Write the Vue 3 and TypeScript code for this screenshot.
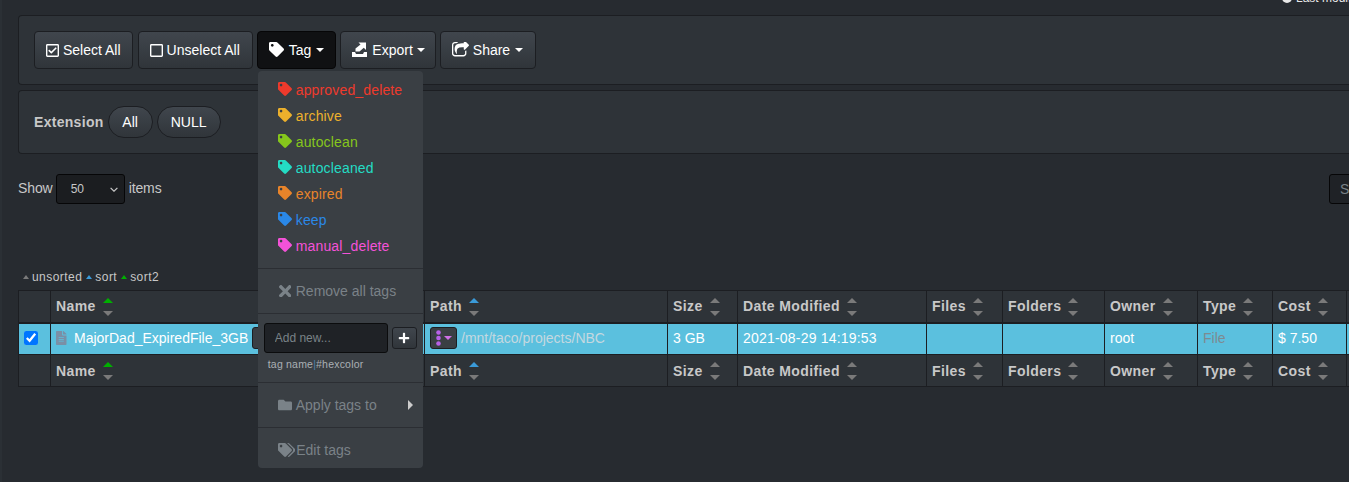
<script setup lang="ts">
// Dark "slate" file table with the Tag dropdown open
interface TagItem {
  name: string
  color: string
}
interface Column {
  label: string
  width: number
  sort: 'none' | 'blue' | 'green'
}

const icons = {
  tag: 'M0 252.118V48C0 21.49 21.49 0 48 0h204.118a48 48 0 0 1 33.941 14.059l211.882 211.882c18.745 18.745 18.745 49.137 0 67.882L293.823 497.941c-18.745 18.745-49.137 18.745-67.882 0L14.059 286.059A48 48 0 0 1 0 252.118zM112 64c-26.51 0-48 21.49-48 48s21.49 48 48 48 48-21.49 48-48-21.49-48-48-48z',
  tags: 'M497.941 225.941L286.059 14.059A48 48 0 0 0 252.118 0H48C21.49 0 0 21.49 0 48v204.118a48 48 0 0 0 14.059 33.941l211.882 211.882c18.745 18.745 49.137 18.745 67.882 0l204.118-204.118c18.745-18.745 18.745-49.137 0-67.882zM112 160c-26.51 0-48-21.49-48-48s21.49-48 48-48 48 21.49 48 48-21.49 48-48 48zm513.941 133.823L421.823 497.941c-18.745 18.745-49.137 18.745-67.882 0l-.36-.36L527.64 323.522c16.999-16.999 26.36-39.6 26.36-63.64s-9.362-46.641-26.36-63.64L331.397 0h48.721a48 48 0 0 1 33.941 14.059l211.882 211.882c18.745 18.745 18.745 49.137 0 67.882z',
  times: 'M242.72 256l100.07-100.07c12.28-12.28 12.28-32.19 0-44.48l-22.24-22.24c-12.28-12.28-32.19-12.28-44.48 0L176 189.28 75.93 89.21c-12.28-12.28-32.19-12.28-44.48 0L9.21 111.45c-12.28 12.28-12.28 32.19 0 44.48L109.28 256 9.21 356.07c-12.28 12.28-12.28 32.19 0 44.48l22.24 22.24c12.28 12.28 32.2 12.28 44.48 0L176 322.72l100.07 100.07c12.28 12.28 32.2 12.28 44.48 0l22.24-22.24c12.28-12.28 12.28-32.19 0-44.48L242.72 256z',
  folder: 'M464 128H272l-64-64H48C21.49 64 0 85.49 0 112v288c0 26.51 21.49 48 48 48h416c26.51 0 48-21.49 48-48V176c0-26.51-21.49-48-48-48z',
  plus: 'M416 208H272V64c0-17.67-14.33-32-32-32h-32c-17.67 0-32 14.33-32 32v144H32c-17.67 0-32 14.33-32 32v32c0 17.67 14.33 32 32 32h144v144c0 17.67 14.33 32 32 32h32c17.67 0 32-14.33 32-32V304h144c17.67 0 32-14.33 32-32v-32c0-17.67-14.33-32-32-32z',
  check: 'M400 32H48C21.49 32 0 53.49 0 80v352c0 26.51 21.49 48 48 48h352c26.51 0 48-21.49 48-48V80c0-26.51-21.49-48-48-48zm0 400H48V80h352v352zm-35.864-241.724L191.547 361.48c-4.705 4.667-12.303 4.637-16.97-.068l-90.781-91.516c-4.667-4.705-4.637-12.303.069-16.971l22.719-22.536c4.705-4.667 12.303-4.637 16.97.069l59.792 60.277 141.352-140.216c4.705-4.667 12.303-4.637 16.97.068l22.536 22.718c4.667 4.706 4.637 12.304-.068 16.971z',
  square: 'M400 32H48C21.5 32 0 53.5 0 80v352c0 26.5 21.5 48 48 48h352c26.5 0 48-21.5 48-48V80c0-26.5-21.5-48-48-48zm-6 400H54c-3.3 0-6-2.7-6-6V86c0-3.3 2.7-6 6-6h340c3.300 0 6 2.700 6 6v340c0 3.300-2.700 6-6 6z',
  share: 'M1472 989v259q0 119-84.5 203.5t-203.5 84.5h-832q-119 0-203.5-84.5t-84.5-203.5v-832q0-119 84.5-203.5t203.5-84.5h255q13 0 22.5 9.5t9.5 22.5q0 27-26 32-77 26-133 60-10 4-16 4h-112q-66 0-113 47t-47 113v832q0 66 47 113t113 47h832q66 0 113-47t47-113v-214q0-19 18-29 28-13 54-37 16-16 35-8 21 9 21 29zm237-496l-384 384q-18 19-45 19-12 0-25-5-39-17-39-59v-192h-160q-323 0-438 131-119 137-74 473 3 23-20 34-8 2-12 2-16 0-26-13-10-14-21-31t-39.5-68.5-49.5-99.5-38.5-114-17.5-122q0-49 3.5-91t14-90 28-88 47-81.5 68.5-74 94.5-61.5 124.5-48.5 159.5-30.5 196.5-11h160v-192q0-42 39-59 13-5 25-5 26 0 45 19l384 384q19 19 19 45t-19 45z',
  file: 'M224 136V0H24C10.7 0 0 10.7 0 24v464c0 13.3 10.7 24 24 24h336c13.3 0 24-10.7 24-24V160H248c-13.2 0-24-10.8-24-24zm64 236c0 6.6-5.4 12-12 12H108c-6.6 0-12-5.4-12-12v-8c0-6.6 5.4-12 12-12h168c6.6 0 12 5.4 12 12v8zm0-64c0 6.6-5.4 12-12 12H108c-6.6 0-12-5.4-12-12v-8c0-6.6 5.4-12 12-12h168c6.6 0 12 5.4 12 12v8zm0-72v8c0 6.6-5.4 12-12 12H108c-6.6 0-12-5.4-12-12v-8c0-6.6 5.4-12 12-12h168c6.6 0 12 5.4 12 12zm96-114.100v6.100H256V0h6.100c6.400 0 12.500 2.500 17 7l97.900 98c4.500 4.500 7 10.600 7 16.900z',
}

const tags: TagItem[] = [
  { name: 'approved_delete', color: '#ee3a2c' },
  { name: 'archive', color: '#ecb02c' },
  { name: 'autoclean', color: '#86c61c' },
  { name: 'autocleaned', color: '#24dcc4' },
  { name: 'expired', color: '#e8842a' },
  { name: 'keep', color: '#2a88e8' },
  { name: 'manual_delete', color: '#f452d8' },
]

const columns: Column[] = [
  { label: 'Name', width: 374, sort: 'green' },
  { label: 'Path', width: 243, sort: 'blue' },
  { label: 'Size', width: 70, sort: 'none' },
  { label: 'Date Modified', width: 189, sort: 'none' },
  { label: 'Files', width: 76, sort: 'none' },
  { label: 'Folders', width: 102, sort: 'none' },
  { label: 'Owner', width: 93, sort: 'none' },
  { label: 'Type', width: 75, sort: 'none' },
  { label: 'Cost', width: 74, sort: 'none' },
]
</script>

<template>
  <div class="page">
    <div class="updated">
      <span class="clock" />
      <span class="updated-text">Last modified</span>
    </div>

    <section class="well toolbar">
      <button class="btn btn--select">
        <svg class="ico" viewBox="0 32 448 448"><path :d="icons.check" /></svg>
        Select All
      </button>
      <button class="btn btn--unselect">
        <svg class="ico" viewBox="0 32 448 448"><path :d="icons.square" /></svg>
        Unselect All
      </button>
      <div class="drop">
        <button class="btn btn--active">
          <svg class="ico ico--tag" viewBox="0 0 512 512"><path :d="icons.tag" /></svg>
          Tag <span class="caret" />
        </button>
        <div class="menu">
          <a v-for="tag in tags" :key="tag.name" class="tag-item" :style="{ color: tag.color }">
            <svg class="tag-ico" viewBox="0 0 512 512"><path :d="icons.tag" /></svg>
            {{ tag.name }}
          </a>
          <div class="divider" />
          <a class="menu-link">
            <svg class="menu-ico menu-ico--times" viewBox="0 80 352 352"><path :d="icons.times" /></svg>
            Remove all tags
          </a>
          <div class="divider" />
          <div class="add-row">
            <input class="add-input" type="text" placeholder="Add new..." />
            <button class="add-btn">
              <svg viewBox="0 0 448 512"><path :d="icons.plus" /></svg>
            </button>
          </div>
          <div class="add-hint">tag name<span class="pipe">|</span>#hexcolor</div>
          <div class="divider" />
          <a class="menu-link">
            <svg class="menu-ico" viewBox="0 0 512 512"><path :d="icons.folder" /></svg>
            Apply tags to
            <span class="sub-caret" />
          </a>
          <div class="divider" />
          <a class="menu-link menu-link--tight">
            <svg class="menu-ico menu-ico--tags" viewBox="0 0 640 512"><path :d="icons.tags" /></svg>
            Edit tags
          </a>
        </div>
      </div>
      <button class="btn btn--export">
        <svg class="ico ico--export" viewBox="0 0 15 15">
          <path d="M0 10h3l1 2h7l1-2h3v5H0z" />
          <path d="M3.500 9.500V6.500L8.500 2.500 6.500.5H14V8l-2.200-2.200-4.300 3.700z" />
        </svg>
        Export <span class="caret" />
      </button>
      <button class="btn btn--share">
        <svg class="ico ico--share" viewBox="64 128 1664 1536"><path :d="icons.share" /></svg>
        Share <span class="caret" />
      </button>
    </section>

    <section class="well filter">
      <strong class="filter-label">Extension</strong>
      <button class="pill pill--all">All</button>
      <button class="pill pill--null">NULL</button>
    </section>

    <div class="length-row">
      <label class="length">
        <span class="length-text">Show</span>
        <span class="select-wrap">
          <select class="length-select">
            <option>50</option>
          </select>
          <svg class="select-chevron" viewBox="0 0 8 5"><path d="M.6.8 4 4.200 7.400.8" /></svg>
        </span>
        <span class="length-text">items</span>
      </label>
      <input class="search" type="text" placeholder="Search" />
    </div>

    <div class="legend">
      <span class="tri tri--up tri--none" /> unsorted
      <span class="tri tri--up tri--blue" /> sort
      <span class="tri tri--up tri--green" /> sort2
    </div>

    <table class="files">
      <colgroup>
        <col style="width: 32px" />
        <col v-for="col in columns" :key="col.label" :style="{ width: col.width + 'px' }" />
        <col style="width: 90px" />
      </colgroup>
      <thead>
        <tr>
          <th />
          <th v-for="col in columns" :key="col.label">
            <span class="th-inner">
              {{ col.label }}
              <span class="sorter">
                <span class="tri tri--up" :class="`tri--${col.sort}`" />
                <span class="tri tri--down tri--none" />
              </span>
            </span>
          </th>
          <th />
        </tr>
      </thead>
      <tbody>
        <tr class="selected">
          <td class="check-cell"><input type="checkbox" checked /></td>
          <td>
            <span class="name-cell">
              <svg class="file-ico" viewBox="0 0 384 512"><path :d="icons.file" /></svg>
              MajorDad_ExpiredFile_3GB
              <button class="mini-btn">
                <span class="caret" />
              </button>
            </span>
          </td>
          <td>
            <span class="path-cell">
              <button class="path-btn">
                <svg class="path-dots" viewBox="0 0 5 16">
                  <circle cx="2.500" cy="2.500" r="2.300" />
                  <circle cx="2.500" cy="8" r="2.300" />
                  <circle cx="2.500" cy="13.500" r="2.300" />
                </svg>
                <span class="caret caret--purple" />
              </button>
              <span class="path-text">/mnt/taco/projects/NBC</span>
            </span>
          </td>
          <td>3 GB</td>
          <td class="date-cell">2021-08-29 14:19:53</td>
          <td />
          <td />
          <td>root</td>
          <td class="type-cell">File</td>
          <td>$ 7.50</td>
          <td />
        </tr>
      </tbody>
      <tfoot>
        <tr>
          <th />
          <th v-for="col in columns" :key="col.label">
            <span class="th-inner">
              {{ col.label }}
              <span class="sorter">
                <span class="tri tri--up" :class="`tri--${col.sort}`" />
                <span class="tri tri--down tri--none" />
              </span>
            </span>
          </th>
          <th />
        </tr>
      </tfoot>
    </table>
  </div>
</template>

<style>
html,
body {
  margin: 0;
  height: 100%;
  overflow: hidden;
  background: #272b30;
}
</style>

<style scoped>
.page {
  width: 1349px;
  height: 482px;
  box-sizing: border-box;
  padding-left: 18px;
  overflow: hidden;
  background: #272b30;
  box-shadow: inset 2px 0 0 #2b3035;
  color: #c8c8c8;
  font-family: "Liberation Sans", Arial, sans-serif;
  font-size: 14px;
  line-height: 20px;
}

/* only the bottom edge of this line is on screen */
.updated {
  display: flex;
  align-items: flex-end;
  gap: 4px;
  height: 15px;
  padding-left: 1264px;
  overflow: hidden;
  white-space: nowrap;
  font-size: 12px;
}

.updated-text {
  margin-bottom: 11px;
  line-height: 12px;
  color: #e8e8e8;
}

.clock {
  flex: none;
  width: 10px;
  height: 10px;
  margin-bottom: 12.500px;
  border-radius: 50%;
  background: #e8e8e8;
}

.well {
  display: flex;
  align-items: center;
  box-sizing: border-box;
  width: 1331px;
  background: #2e3338;
  border: 1px solid #1c1e22;
  border-right: 0;
  border-radius: 4px 0 0 4px;
}

.toolbar {
  height: 70px;
  gap: 4px;
  padding-left: 15px;
}

.filter {
  height: 64px;
  margin-top: 5px;
  padding-left: 15px;
}

.btn {
  display: inline-flex;
  align-items: center;
  gap: 4px;
  height: 38px;
  padding: 0 11px;
  border: 1px solid #1c1e22;
  border-radius: 4px;
  background: linear-gradient(#40464d, #30353a);
  color: #fff;
  font: inherit;
  white-space: nowrap;
}

.btn--select {
  margin-right: 1px;
}

.btn--unselect {
  padding-right: 12px;
}

.btn--active {
  gap: 5px;
  background: #101113;
  border-color: #060607;
}

.btn--export {
  padding-right: 10px;
}

.btn--share {
  padding-right: 12px;
}

.btn--share .caret {
  margin-left: 1px;
}

.ico {
  flex: none;
  width: 13px;
  height: 13px;
  fill: #fff;
}

.ico--tag {
  width: 15px;
  height: 15px;
  margin-top: -2px;
}

.ico--export {
  width: 15px;
  height: 15px;
  margin-top: -1px;
  margin-right: 1px;
}

.ico--share {
  width: 17px;
  height: 15.700px;
}

.caret {
  display: inline-block;
  width: 0;
  height: 0;
  border-top: 4px solid #fff;
  border-left: 4px solid transparent;
  border-right: 4px solid transparent;
}

.drop {
  position: relative;
}

.menu {
  position: absolute;
  z-index: 10;
  top: 40px;
  left: 1px;
  width: 165px;
  height: 397px;
  box-sizing: border-box;
  padding-top: 6px;
  overflow: hidden;
  border-radius: 4px;
  background: #3a3f44;
}

.tag-item {
  display: flex;
  align-items: center;
  gap: 4px;
  height: 26px;
  padding-left: 20px;
  letter-spacing: 0.15px;
}

.tag-ico {
  flex: none;
  width: 14px;
  height: 14px;
  margin-top: -2px;
  fill: currentColor;
}

.divider {
  height: 1px;
  background: #2b2e33;
}

.tag-item + .divider {
  margin-top: 9px;
}

.add-hint + .divider {
  margin-top: 8px;
}

.menu-link {
  display: flex;
  align-items: center;
  gap: 4px;
  height: 44px;
  padding-left: 20px;
  color: #7a8288;
}

.menu-link--tight {
  gap: 1px;
}

.menu-ico {
  flex: none;
  width: 14px;
  height: 14px;
  fill: #7a8288;
}

.menu-ico--times {
  width: 12.500px;
  height: 12.500px;
  margin-left: 1px;
  margin-right: 0.500px;
}

.menu-ico--tags {
  width: 17.500px;
}

.sub-caret {
  margin-left: auto;
  margin-right: 10px;
  width: 0;
  height: 0;
  border-left: 5px solid #ccc;
  border-top: 5px solid transparent;
  border-bottom: 5px solid transparent;
}

.add-row {
  display: flex;
  align-items: center;
  gap: 4px;
  padding: 9px 6px 0;
}

.add-input {
  box-sizing: border-box;
  width: 124px;
  height: 30px;
  padding: 0 10px;
  border: 1px solid #0b0c0d;
  border-radius: 3px;
  background: #1f2226;
  color: #c8c8c8;
  font: inherit;
  font-size: 12px;
}

.add-input::placeholder {
  color: #7a8288;
  opacity: 1;
}

.add-btn {
  display: flex;
  align-items: center;
  justify-content: center;
  box-sizing: border-box;
  width: 25px;
  height: 22px;
  padding: 0;
  border: 1px solid #1c1e22;
  border-radius: 3px;
  background: linear-gradient(#40464d, #30353a);
}

.add-btn svg {
  width: 12px;
  height: 12px;
  fill: #fff;
}

.add-hint {
  height: 20px;
  padding: 1px 0 0 10px;
  font-size: 10.500px;
  line-height: 20px;
  color: #aab0b5;
  letter-spacing: 0.2px;
}

.pipe {
  color: #4a7fa8;
}

.filter-label {
  margin-right: 4px;
  letter-spacing: 0.3px;
}

.pill {
  height: 32px;
  padding: 0;
  margin-right: 4px;
  border: 1px solid #1c1e22;
  border-radius: 16px;
  background: linear-gradient(#40464d, #30353a);
  color: #fff;
  font: inherit;
}

.pill--all {
  width: 45px;
}

.pill--null {
  width: 64px;
}

.length-row {
  display: flex;
  align-items: center;
  justify-content: space-between;
  height: 30px;
  margin-top: 20px;
}

.length {
  display: flex;
  align-items: center;
  gap: 4px;
}

.length-text {
  margin-bottom: 2px;
  letter-spacing: -0.1px;
}

.select-wrap {
  position: relative;
  display: block;
  height: 30px;
  margin-left: -1px;
}

.length-select {
  display: block;
  box-sizing: border-box;
  width: 69px;
  height: 30px;
  padding: 0 14px;
  appearance: none;
  border: 1px solid #060607;
  border-radius: 3px;
  background: #1b1d20;
  color: #c8c8c8;
  font: inherit;
  font-size: 12px;
}

.select-chevron {
  position: absolute;
  top: 13px;
  right: 7px;
  width: 8px;
  height: 5px;
  fill: none;
  stroke: #c8c8c8;
  stroke-width: 1.200;
  pointer-events: none;
}

.search {
  box-sizing: border-box;
  width: 120px;
  height: 30px;
  margin-right: -100px;
  padding: 0 10px;
  border: 1px solid #060607;
  border-radius: 3px;
  background: #1f2226;
  font: inherit;
  font-size: 14px;
}

.search::placeholder {
  color: #7a8288;
  opacity: 1;
}

.legend {
  display: flex;
  align-items: center;
  gap: 3px;
  height: 14px;
  margin-top: 66px;
  margin-left: 4px;
  font-size: 12px;
  line-height: 14px;
  letter-spacing: 0.45px;
}

.legend .tri {
  margin-left: 1px;
}

.tri {
  display: block;
  width: 0;
  height: 0;
  border-left: 5px solid transparent;
  border-right: 5px solid transparent;
}

.legend .tri {
  border-left-width: 3.500px;
  border-right-width: 3.500px;
}

.tri--up {
  border-bottom: 5px solid #7a7a7a;
}

.legend .tri--up {
  border-bottom-width: 4px;
}

.tri--down {
  border-top: 5px solid #7a7a7a;
}

.tri--none.tri--up {
  border-bottom-color: #7a7a7a;
}

.tri--blue.tri--up {
  border-bottom-color: #3a9ad8;
}

.tri--green.tri--up {
  border-bottom-color: #00b000;
}

.files {
  width: 1418px;
  margin-top: 6px;
  table-layout: fixed;
  border-collapse: collapse;
}

.files th,
.files td {
  box-sizing: border-box;
  padding: 0 5px;
  border: 1px solid #1c1e22;
  text-align: left;
  white-space: nowrap;
  overflow: hidden;
}

.files th {
  height: 32px;
  background: #2e3338;
  color: #c8c8c8;
  font-weight: 700;
  letter-spacing: 0.4px;
}

.files thead th {
  border-bottom-width: 2px;
}

.files td {
  height: 32px;
  padding-bottom: 1px;
  background: #5bc0de;
  color: #fff;
}

.th-inner {
  display: flex;
  align-items: center;
  gap: 7px;
}

.sorter {
  display: flex;
  flex-direction: column;
  gap: 8px;
  margin-top: 1px;
}

.check-cell input {
  display: block;
  width: 14px;
  height: 14px;
  margin: 0;
}

.name-cell {
  display: flex;
  align-items: center;
  gap: 4px;
}

.file-ico {
  flex: none;
  width: 10.500px;
  height: 14px;
  margin-top: -1px;
  margin-right: 3.500px;
  fill: #7a8fa6;
}

.mini-btn {
  width: 30px;
  height: 22px;
  border: 1px solid #1c1e22;
  border-radius: 3px;
  background: #3a3f44;
}

.path-cell {
  display: flex;
  align-items: center;
  gap: 4px;
}

.path-btn {
  display: flex;
  align-items: center;
  justify-content: center;
  gap: 3px;
  box-sizing: border-box;
  width: 27px;
  height: 22px;
  padding: 0;
  border: 1px solid #1c1e22;
  border-radius: 3px;
  background: #3a3f44;
}

.path-dots {
  width: 5px;
  height: 16px;
  fill: #b860e8;
}

.caret--purple {
  border-top-color: #d070e8;
}

.path-text {
  color: #c4d8e0;
}

.date-cell {
  letter-spacing: 0.2px;
}

.files .type-cell {
  color: #7e8a90;
}
</style>
